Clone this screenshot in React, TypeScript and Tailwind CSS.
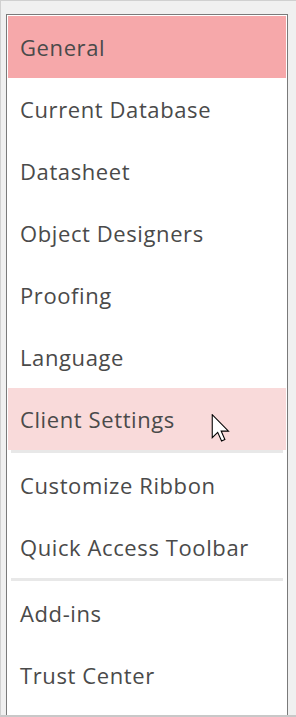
import React from "react";

const Cursor = () => (
  <svg width="19" height="28" viewBox="0 0 12.5 19.5" className="absolute left-[203px] top-[26px]">
    <path d="M0.5 0.5 L0.5 16.5 L4.3 12.8 L7 18.8 L9.3 17.8 L6.7 11.9 L11.8 11.9 Z" fill="#fff" stroke="#000" strokeWidth="0.75" strokeLinejoin="miter" />
  </svg>
);

function Item({ label, bg, cursor }: { label: string; bg?: string; cursor?: boolean }) {
  return (
    <div className={`relative h-[62px] flex items-center pl-[12px] ${bg ?? ""}`}>
      <span className="text-[22px] tracking-[0.6px] text-[#4a4a4a] leading-none">{label}</span>
      {cursor && <Cursor />}
    </div>
  );
}

const Sep = () => (
  <div className="h-[4px] flex">
    <div className="ml-[3px] w-[272px] h-[3px] bg-[#e8e8e8]" />
  </div>
);

export default function App() {
  return (
    <div
      className="w-[296px] h-[717px] bg-[#f0f0f0] border-t border-l border-b-2 border-t-[#d0d0d0] border-l-[#d0d0d0] border-b-[#c8c8c8] pt-[13px] pl-[5px] pr-[8px] flex flex-col"
      style={{ fontFamily: '"Open Sans", "Noto Sans", sans-serif' }}
    >
      <div className="flex-1 bg-white border-t border-l border-r border-[#7a7a7a] p-[1px]">
        <Item label="General" bg="bg-[#f6a8aa]" />
        <Item label="Current Database" />
        <Item label="Datasheet" />
        <Item label="Object Designers" />
        <Item label="Proofing" />
        <Item label="Language" />
        <Item label="Client Settings" bg="bg-[#f9dada]" cursor />
        <Sep />
        <Item label="Customize Ribbon" />
        <Item label="Quick Access Toolbar" />
        <Sep />
        <Item label="Add-ins" />
        <Item label="Trust Center" />
      </div>
    </div>
  );
}
